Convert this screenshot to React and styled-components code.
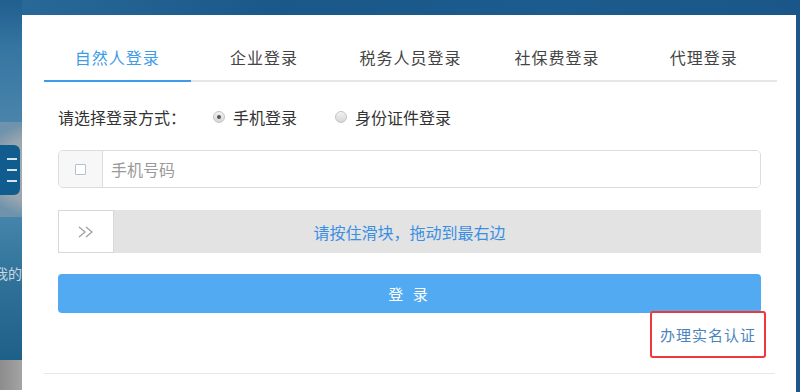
import React, { useState } from 'react';
import styled, { createGlobalStyle } from 'styled-components';

const GlobalStyle = createGlobalStyle`
  html, body {
    margin: 0;
    padding: 0;
  }
  body {
    font-family: "Noto Sans CJK SC", "Microsoft YaHei", "Noto Sans", sans-serif;
    background: #ffffff;
  }
`;

const StyledPage = styled.div`
  display: flex;
  width: 800px;
  height: 392px;
  overflow: hidden;
  background: linear-gradient(90deg, #2a6a98 0%, #195889 35%, #1c5b8d 70%, #1a5788 100%);
`;

const StyledBackdrop = styled.div`
  display: flex;
  flex-direction: column;
  width: 22px;
  flex-shrink: 0;
  overflow: hidden;

  .sky {
    height: 122px;
    background: linear-gradient(180deg, #215f8e 0%, #3576a2 40%, #4a84aa 100%);
  }

  .cloud {
    display: flex;
    align-items: center;
    height: 95px;
    background: radial-gradient(ellipse 60px 48px at 40px 48px, #a4adb4 0%, #9aa6ae 70%, #6f93ac 100%);
  }

  .menu {
    display: flex;
    flex-direction: column;
    justify-content: center;
    gap: 9px;
    width: 32px;
    height: 50px;
    margin-left: -12px;
    padding-left: 19px;
    box-sizing: border-box;
    border-radius: 6px;
    background: #115c8e;

    span {
      display: block;
      width: 10px;
      height: 2px;
      background: #d6e2ec;
    }
  }

  .sea {
    flex: 1;
    padding-top: 46px;
    background: linear-gradient(180deg, #4585ab 0%, #2f7198 45%, #1f6088 100%);
    color: #c8d6e0;
    font-size: 14px;
    white-space: nowrap;
    text-indent: -6px;
  }

  .ground {
    height: 30px;
    background: linear-gradient(90deg, #8c8c8c, #a4a4a4);
  }

  .floor {
    height: 2px;
    background: #ffffff;
  }
`;

const StyledMain = styled.div`
  display: flex;
  flex: 1;
  flex-direction: column;
  padding-top: 15px;
`;

const StyledPanel = styled.div`
  flex: 1;
  width: 774px;
  padding: 0 19px 0 22px;
  box-sizing: border-box;
  background: #ffffff;
`;

const StyledTabs = styled.ul`
  display: flex;
  margin: 28px 0 0;
  padding: 0;
  list-style: none;
  border-bottom: 2px solid #e6e6e6;
`;

const StyledTab = styled.li`
  flex: 1;
  height: 37px;
  margin-bottom: -2px;
  line-height: 28px;
  text-align: center;
  font-size: 16px;
  letter-spacing: 1px;
  color: ${({ $active }) => ($active ? '#3d9be9' : '#444444')};
  border-bottom: 2px solid ${({ $active }) => ($active ? '#3d9be9' : 'transparent')};
  cursor: pointer;
`;

const StyledForm = styled.div`
  display: flex;
  flex-direction: column;
  margin: 0 16px 0 14px;
`;

const StyledMethodRow = styled.div`
  display: flex;
  align-items: center;
  height: 24px;
  margin-top: 23px;
  font-size: 16px;
  color: #333333;

  .label {
    width: 155px;
  }
`;

const StyledRadio = styled.label`
  display: flex;
  align-items: center;
  gap: 8px;
  margin-right: 38px;
  cursor: pointer;

  i {
    position: relative;
    width: 10px;
    height: 10px;
    border: 1px solid #c4c4c4;
    border-radius: 50%;
    background: linear-gradient(180deg, #f2f2f2, #d6d6d6);

    &:after {
      content: '';
      display: ${({ $checked }) => ($checked ? 'block' : 'none')};
      position: absolute;
      top: 3px;
      left: 3px;
      width: 4px;
      height: 4px;
      border-radius: 50%;
      background: #555555;
    }
  }
`;

const StyledInputGroup = styled.div`
  display: flex;
  height: 38px;
  margin-top: 21px;
  border: 1px solid #dcdcdc;
  border-radius: 5px;
  box-sizing: border-box;
  overflow: hidden;

  .addon {
    display: flex;
    align-items: center;
    justify-content: center;
    width: 43px;
    border-right: 1px solid #dcdcdc;
    background: #f7f7f7;
  }

  .addon span {
    width: 9px;
    height: 9px;
    border: 1px solid #b7c0cf;
    border-radius: 1px;
    background: #ffffff;
  }

  input {
    flex: 1;
    padding: 0 8px;
    border: 0;
    outline: none;
    font-family: inherit;
    font-size: 16px;
    color: #333333;
  }

  input::placeholder {
    color: #9a9a9a;
  }
`;

const StyledSlider = styled.div`
  position: relative;
  display: flex;
  align-items: center;
  justify-content: center;
  height: 43px;
  margin-top: 22px;
  background: #e3e3e3;
  font-size: 16px;
  color: #3a8fe4;

  .handle {
    position: absolute;
    top: 0;
    left: 0;
    display: flex;
    align-items: center;
    justify-content: center;
    width: 56px;
    height: 43px;
    box-sizing: border-box;
    border: 1px solid #d8d8d8;
    background: #ffffff;
  }
`;

const StyledButton = styled.button`
  height: 39px;
  margin-top: 21px;
  border: 0;
  border-radius: 4px;
  background: #52aaf2;
  color: #ffffff;
  font-family: inherit;
  font-size: 15px;
  letter-spacing: 3px;
  cursor: pointer;
`;

const StyledLinkRow = styled.div`
  display: flex;
  justify-content: flex-end;
  margin: -2px -5px 0 0;

  a {
    display: block;
    padding: 0 8px;
    line-height: 43px;
    border: 2px solid #f0383b;
    border-radius: 3px;
    font-size: 15px;
    letter-spacing: 1px;
    color: #4a84be;
    text-decoration: none;
  }
`;

const StyledFooterLine = styled.div`
  height: 1px;
  margin: 15px 2px 0 0;
  background: #e8e8e8;
`;

const tabs = ['自然人登录', '企业登录', '税务人员登录', '社保费登录', '代理登录'];

const App = () => {
  const [activeTab, setActiveTab] = useState(0);
  const [method, setMethod] = useState('phone');

  return (
    <>
      <GlobalStyle />
      <StyledPage>
        <StyledBackdrop>
          <div className="sky" />
          <div className="cloud">
            <div className="menu">
              <span />
              <span />
              <span />
            </div>
          </div>
          <div className="sea">我的</div>
          <div className="ground" />
          <div className="floor" />
        </StyledBackdrop>

        <StyledMain>
          <StyledPanel>
            <StyledTabs>
              {tabs.map((tab, i) => (
                <StyledTab key={tab} $active={i === activeTab} onClick={() => setActiveTab(i)}>
                  {tab}
                </StyledTab>
              ))}
            </StyledTabs>

            <StyledForm>
              <StyledMethodRow>
                <span className="label">请选择登录方式：</span>
                <StyledRadio $checked={method === 'phone'} onClick={() => setMethod('phone')}>
                  <i />
                  手机登录
                </StyledRadio>
                <StyledRadio $checked={method === 'id'} onClick={() => setMethod('id')}>
                  <i />
                  身份证件登录
                </StyledRadio>
              </StyledMethodRow>

              <StyledInputGroup>
                <div className="addon">
                  <span />
                </div>
                <input type="text" placeholder="手机号码" />
              </StyledInputGroup>

              <StyledSlider>
                <div className="handle">
                  <svg width="18" height="14" viewBox="0 0 18 14">
                    <path d="M2 2 L8 7 L2 12 M9 2 L15 7 L9 12" fill="none" stroke="#a0a0a0" strokeWidth="1.3" />
                  </svg>
                </div>
                请按住滑块，拖动到最右边
              </StyledSlider>

              <StyledButton>登 录</StyledButton>

              <StyledLinkRow>
                <a href="#">办理实名认证</a>
              </StyledLinkRow>
            </StyledForm>

            <StyledFooterLine />
          </StyledPanel>
        </StyledMain>
      </StyledPage>
    </>
  );
};

export default App;
